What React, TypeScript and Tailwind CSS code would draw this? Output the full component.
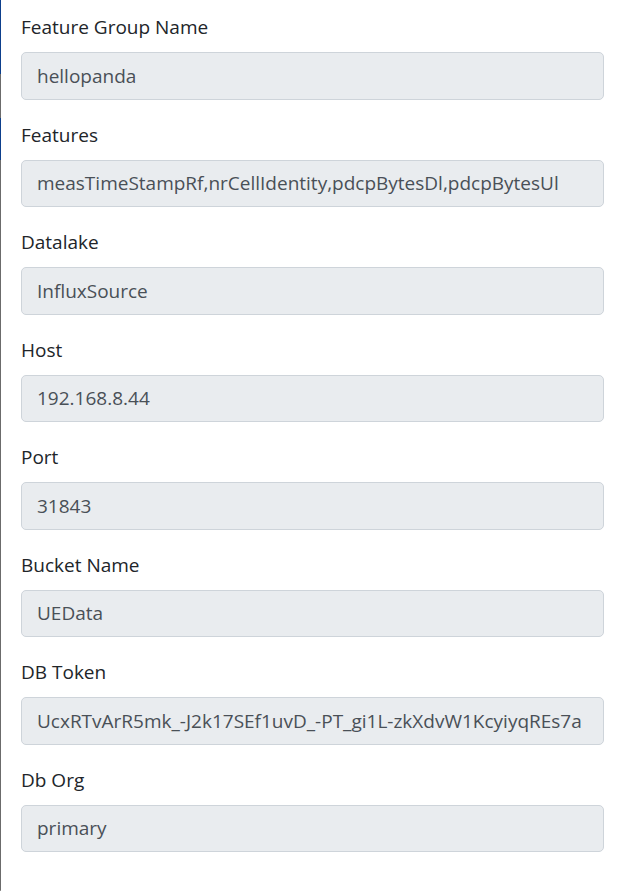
const FIELDS: { label: string; value: string }[] = [
  { label: "Feature Group Name", value: "hellopanda" },
  { label: "Features", value: "measTimeStampRf,nrCellIdentity,pdcpBytesDl,pdcpBytesUl" },
  { label: "Datalake", value: "InfluxSource" },
  { label: "Host", value: "192.168.8.44" },
  { label: "Port", value: "31843" },
  { label: "Bucket Name", value: "UEData" },
  { label: "DB Token", value: "UcxRTvArR5mk_-J2k17SEf1uvD_-PT_gi1L-zkXdvW1KcyiyqREs7a" },
  { label: "Db Org", value: "primary" },
];

export default function App() {
  return (
    <div className="flex h-[891px] w-[619px] overflow-hidden bg-white font-['Open_Sans',sans-serif]">
      {/* edge of the panel */}
      <div className="flex w-px flex-col">
        <div className="h-[74px] bg-[#0d3f8c]" />
        <div className="h-[44px] bg-[#6b6b6b]" />
        <div className="h-[42px] bg-[#0d3f8c]" />
        <div className="flex-1 rounded-bl-[6px] bg-[#6b6b6b]" />
      </div>
      <form className="flex-1 pl-5 pr-[15px] pt-[12px]" onSubmit={(e) => e.preventDefault()}>
        {FIELDS.map((f) => (
          <div key={f.label} className="mb-5">
            <label className="mb-[10px] block text-[19px] leading-[30px] text-[#212529]">{f.label}</label>
            <input
              type="text"
              disabled
              value={f.value}
              className="block h-[47.5px] w-full rounded-[5px] border border-[#ced4da] bg-[#e9ecef] px-[15px] text-[19px] text-[#495057] outline-none"
            />
          </div>
        ))}
      </form>
    </div>
  );
}
